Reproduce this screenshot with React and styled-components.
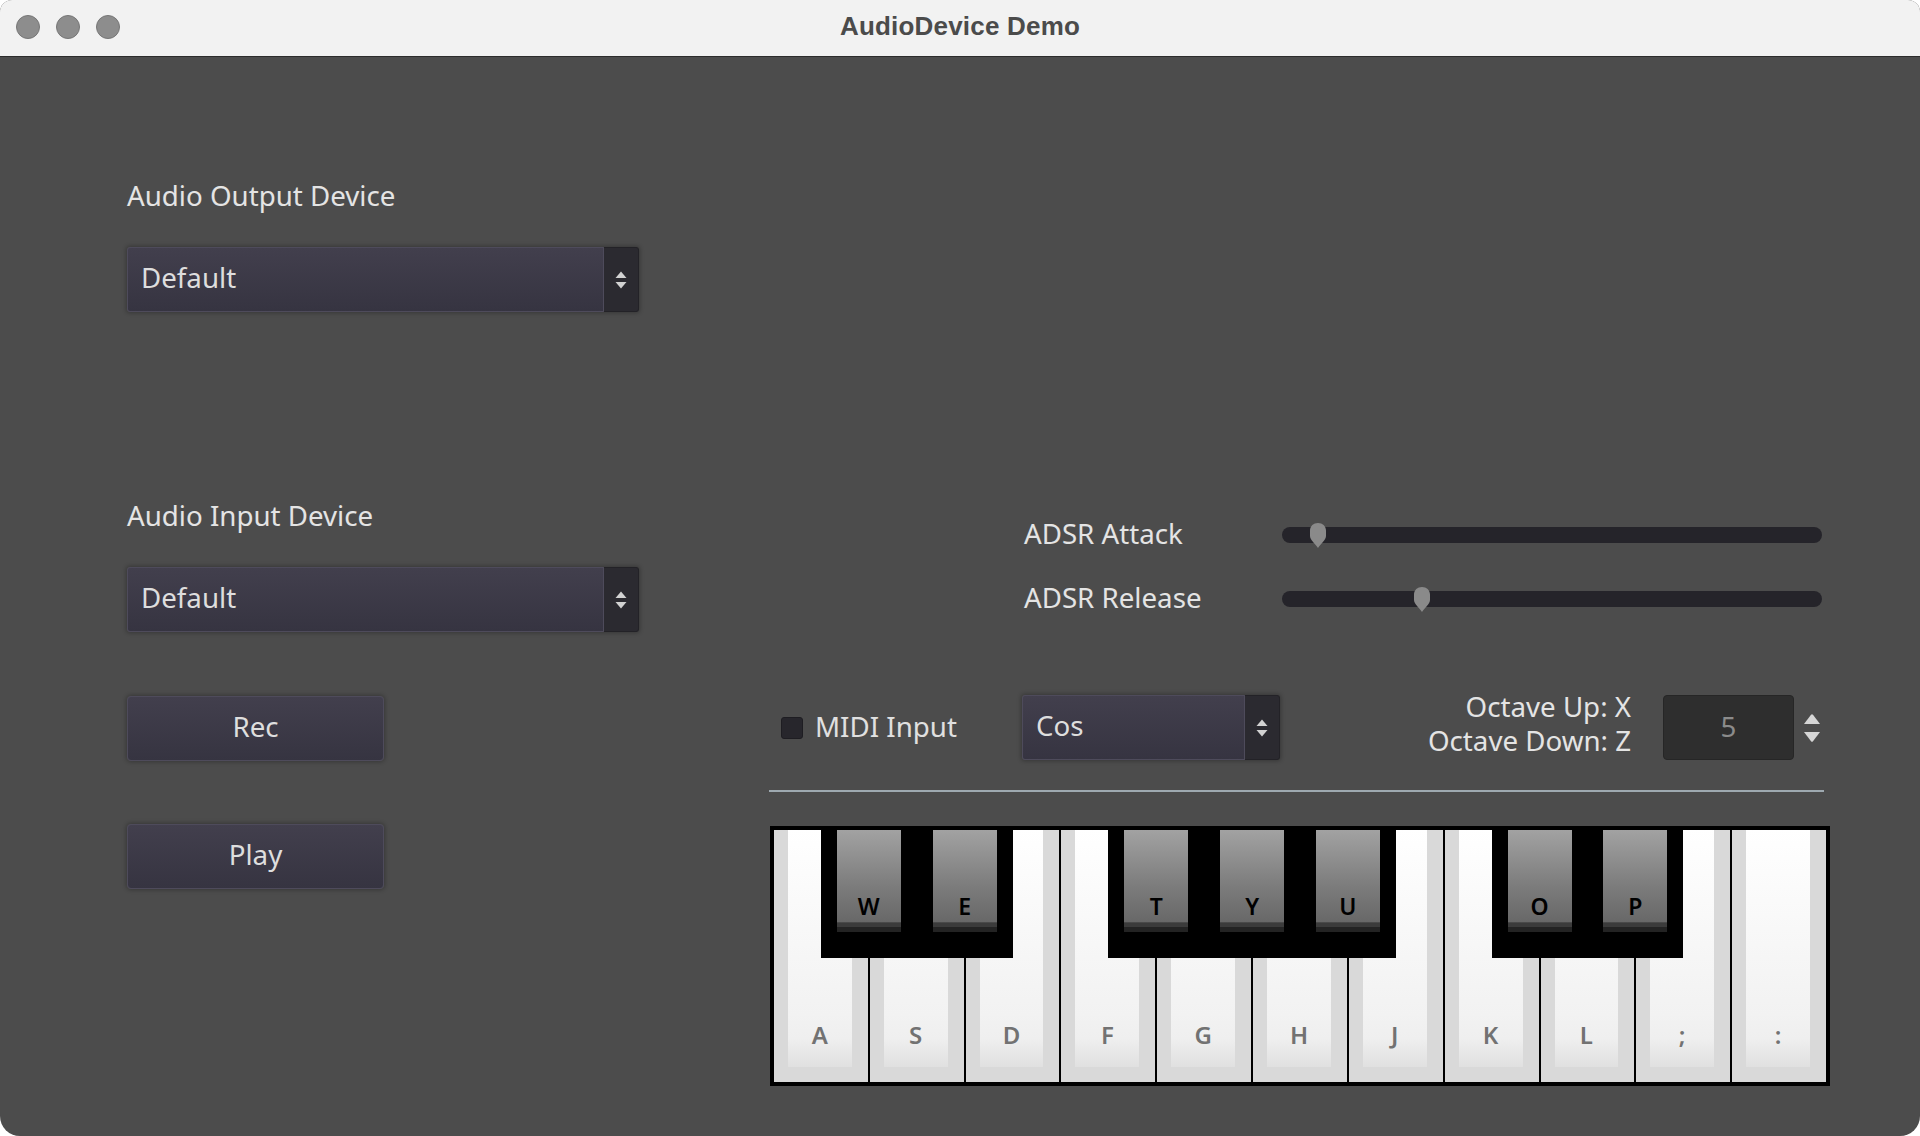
import React from "react";
import styled, { createGlobalStyle } from "styled-components";

const GlobalStyle = createGlobalStyle`
    html, body {
        margin: 0;
        padding: 0;
        background: #ffffff;
        overflow: hidden;
    }
    * {
        box-sizing: border-box;
    }
`;

const UI_FONT = `"Noto Sans", "DejaVu Sans", sans-serif`;

const whiteKeys = ["A", "S", "D", "F", "G", "H", "J", "K", "L", ";", ":"];
const blackKeys = [
    { label: "W", slot: 1 },
    { label: "E", slot: 2 },
    { label: "T", slot: 4 },
    { label: "Y", slot: 5 },
    { label: "U", slot: 6 },
    { label: "O", slot: 8 },
    { label: "P", slot: 9 },
];

const UpDownIcon = () => (
    <svg width="12" height="18" viewBox="0 0 12 18">
        <path d="M6 0.5L11.5 7H0.5Z" fill="#d2d2d2" />
        <path d="M6 17.5L11.5 11H0.5Z" fill="#d2d2d2" />
    </svg>
);

const SpinIcon = () => (
    <svg width="16" height="28" viewBox="0 0 16 28">
        <path d="M7 0.8Q8 -0.2 9 0.8L16 10H0Z" fill="#d6d6d6" />
        <path d="M7 27.2Q8 28.2 9 27.2L16 18H0Z" fill="#d6d6d6" />
    </svg>
);

const Grabber = () => (
    <svg width="16" height="25" viewBox="0 0 16 25">
        <path
            d="M8 0C12.5 0 16 3 16 7.5L16 13C16 17 10.5 21 8 25C5.5 21 0 17 0 13L0 7.5C0 3 3.5 0 8 0Z"
            fill="#8a8a8a"
        />
    </svg>
);

const Dropdown = ({ value, width }) => (
    <Select $width={width}>
        <SelectValue>{value}</SelectValue>
        <SelectArrow>
            <UpDownIcon />
        </SelectArrow>
    </Select>
);

const Slider = ({ value }) => (
    <Track>
        <Thumb $pos={Math.round(value * 524)}>
            <Grabber />
        </Thumb>
    </Track>
);

const App = () => {
    return (
        <>
            <GlobalStyle />
            <Window>
                <TitleBar>
                    <Lights>
                        <Light />
                        <Light />
                        <Light />
                    </Lights>
                    <Title>AudioDevice Demo</Title>
                </TitleBar>
                <Body>
                    <LeftColumn>
                        <Label>Audio Output Device</Label>
                        <Dropdown value="Default" width={512} />
                        <Label $top={186}>Audio Input Device</Label>
                        <Dropdown value="Default" width={512} />
                        <Button $top={64}>Rec</Button>
                        <Button $top={63}>Play</Button>
                    </LeftColumn>
                    <RightColumn>
                        <AdsrRow>
                            <AdsrLabel>ADSR Attack</AdsrLabel>
                            <Slider value={0.053} />
                        </AdsrRow>
                        <AdsrRow $top={24}>
                            <AdsrLabel>ADSR Release</AdsrLabel>
                            <Slider value={0.252} />
                        </AdsrRow>
                        <ControlRow>
                            <MidiToggle>
                                <CheckBox />
                                <Text>MIDI Input</Text>
                            </MidiToggle>
                            <Dropdown value="Cos" width={258} />
                            <Spacer />
                            <OctaveText>
                                <OctaveLine>Octave Up: X</OctaveLine>
                                <OctaveLine>Octave Down: Z</OctaveLine>
                            </OctaveText>
                            <SpinBox>5</SpinBox>
                            <SpinArrows>
                                <SpinIcon />
                            </SpinArrows>
                        </ControlRow>
                        <Separator />
                        <Keyboard>
                            {whiteKeys.map((k) => (
                                <WhiteKey key={k}>
                                    <WhiteFace>{k}</WhiteFace>
                                </WhiteKey>
                            ))}
                            {blackKeys.map((k) => (
                                <BlackKey key={k.label} $slot={k.slot}>
                                    <BlackFace>{k.label}</BlackFace>
                                </BlackKey>
                            ))}
                        </Keyboard>
                    </RightColumn>
                </Body>
            </Window>
        </>
    );
};

export default App;

const Window = styled.div`
    width: 1920px;
    height: 1136px;
    background: #4c4c4c;
    border-radius: 12px 12px 20px 20px;
    overflow: hidden;
    display: flex;
    flex-direction: column;
`;

const TitleBar = styled.div`
    position: relative;
    height: 57px;
    flex: none;
    background: #f2f2f2;
    border-bottom: 1px solid #2c2c2c;
    display: flex;
    align-items: center;
    justify-content: center;
`;

const Lights = styled.div`
    position: absolute;
    left: 16px;
    top: 15px;
    display: flex;
    gap: 16px;
`;

const Light = styled.div`
    width: 24px;
    height: 24px;
    border-radius: 50%;
    background: #8d8d8d;
    border: 1px solid #777777;
`;

const Title = styled.div`
    font-family: "Liberation Sans", Arial, sans-serif;
    font-weight: bold;
    font-size: 26px;
    letter-spacing: 0.2px;
    color: #4b4b4b;
    margin-bottom: 3px;
`;

const Body = styled.div`
    flex: 1;
    display: flex;
    gap: 130px;
    padding-left: 127px;
    font-family: ${UI_FONT};
    font-size: 27.7px;
    line-height: 34px;
    color: #e4e4e4;
`;

const LeftColumn = styled.div`
    width: 512px;
    padding-top: 121px;
    display: flex;
    flex-direction: column;
`;

const Label = styled.div`
    margin-top: ${(p) => p.$top || 0}px;
    margin-bottom: 35px;
`;

const Select = styled.div`
    display: flex;
    width: ${(p) => p.$width}px;
    height: 65px;
    flex: none;
    border-radius: 3px;
    box-shadow: 0 0 4px 1px rgba(0, 0, 0, 0.28);
`;

const SelectValue = styled.div`
    flex: 1;
    display: flex;
    align-items: center;
    padding: 0 0 6px 13px;
    color: #dedede;
    background: linear-gradient(#423f4d, #363441);
    border: 1px solid #4e4b5b;
    border-radius: 3px 0 0 3px;
`;

const SelectArrow = styled.div`
    width: 35px;
    display: flex;
    align-items: center;
    justify-content: center;
    background: #2b2a30;
    border: 1px solid #232227;
    border-left: none;
    border-radius: 0 3px 3px 0;
`;

const Button = styled.div`
    margin-top: ${(p) => p.$top}px;
    width: 257px;
    height: 65px;
    flex: none;
    display: flex;
    align-items: center;
    justify-content: center;
    padding-bottom: 5px;
    color: #dedede;
    background: linear-gradient(#423f4d, #363441);
    border: 1px solid #4e4b5b;
    border-radius: 4px;
    box-shadow: 0 0 4px 1px rgba(0, 0, 0, 0.28);
`;

const RightColumn = styled.div`
    width: 1061px;
    padding-top: 458px;
    display: flex;
    flex-direction: column;
`;

const AdsrRow = styled.div`
    margin-top: ${(p) => p.$top || 0}px;
    height: 40px;
    display: flex;
    align-items: center;
    padding-left: 255px;
`;

const AdsrLabel = styled.div`
    width: 258px;
    padding-bottom: 5px;
`;

const Track = styled.div`
    position: relative;
    width: 540px;
    height: 16px;
    border-radius: 8px;
    background: #25242a;
`;

const Thumb = styled.div`
    position: absolute;
    top: -4px;
    left: ${(p) => p.$pos}px;
    width: 16px;
    height: 25px;
    display: flex;
`;

const ControlRow = styled.div`
    margin-top: 76px;
    height: 65px;
    display: flex;
    align-items: center;
    padding: 0 10px 0 12px;
`;

const MidiToggle = styled.div`
    width: 241px;
    display: flex;
    align-items: center;
    gap: 12px;
`;

const CheckBox = styled.div`
    width: 22px;
    height: 22px;
    border-radius: 3px;
    background: #27262c;
    border: 1px solid #1e1d22;
`;

const Text = styled.span`
    color: #e0e0e0;
    padding-bottom: 4px;
`;

const Spacer = styled.div`
    flex: 1;
`;

const OctaveText = styled.div`
    text-align: right;
    margin-right: 32px;
    padding-bottom: 6px;
`;

const OctaveLine = styled.div`
    height: 34px;
    line-height: 30px;
`;

const SpinBox = styled.div`
    width: 131px;
    height: 65px;
    display: flex;
    align-items: center;
    justify-content: center;
    padding-bottom: 4px;
    color: #8b8b8b;
    background: #2e2e2e;
    border: 1px solid #262626;
    border-radius: 4px;
`;

const SpinArrows = styled.div`
    margin-left: 10px;
    display: flex;
    align-items: center;
`;

const Separator = styled.div`
    margin-top: 30px;
    width: 1055px;
    height: 2px;
    background: #9ea9b0;
`;

const Keyboard = styled.div`
    position: relative;
    margin-top: 34px;
    margin-left: 1px;
    width: 1060px;
    height: 260px;
    border: 4px solid #000000;
    background: #000000;
    display: flex;
    gap: 2px;
`;

const WhiteKey = styled.div`
    flex: 1;
    background: #d9d9d9;
    padding: 0 16px 15px 14px;
    display: flex;
`;

const WhiteFace = styled.div`
    flex: 1;
    display: flex;
    align-items: flex-end;
    justify-content: center;
    padding-bottom: 18px;
    background: linear-gradient(#ffffff 0%, #f2f2f2 78%, #efefef 88%, #e0e0e0 100%);
    font-size: 24px;
    font-weight: 600;
    line-height: 28px;
    color: #727272;
`;

const BlackKey = styled.div`
    position: absolute;
    top: 0;
    left: calc((100% + 2px) * ${(p) => p.$slot} / 11 - 49px);
    width: 96px;
    height: 128px;
    background: #000000;
    padding: 0 16px;
`;

const BlackFace = styled.div`
    height: 102px;
    display: flex;
    align-items: flex-end;
    justify-content: center;
    padding-bottom: 13px;
    background: linear-gradient(
        #a2a2a2 0%,
        #7c7c7c 55%,
        #686868 90%,
        #3b3b3b 91%,
        #3b3b3b 95%,
        #232323 95%,
        #232323 100%
    );
    font-size: 23px;
    font-weight: 600;
    line-height: 26px;
    color: #000000;
`;
